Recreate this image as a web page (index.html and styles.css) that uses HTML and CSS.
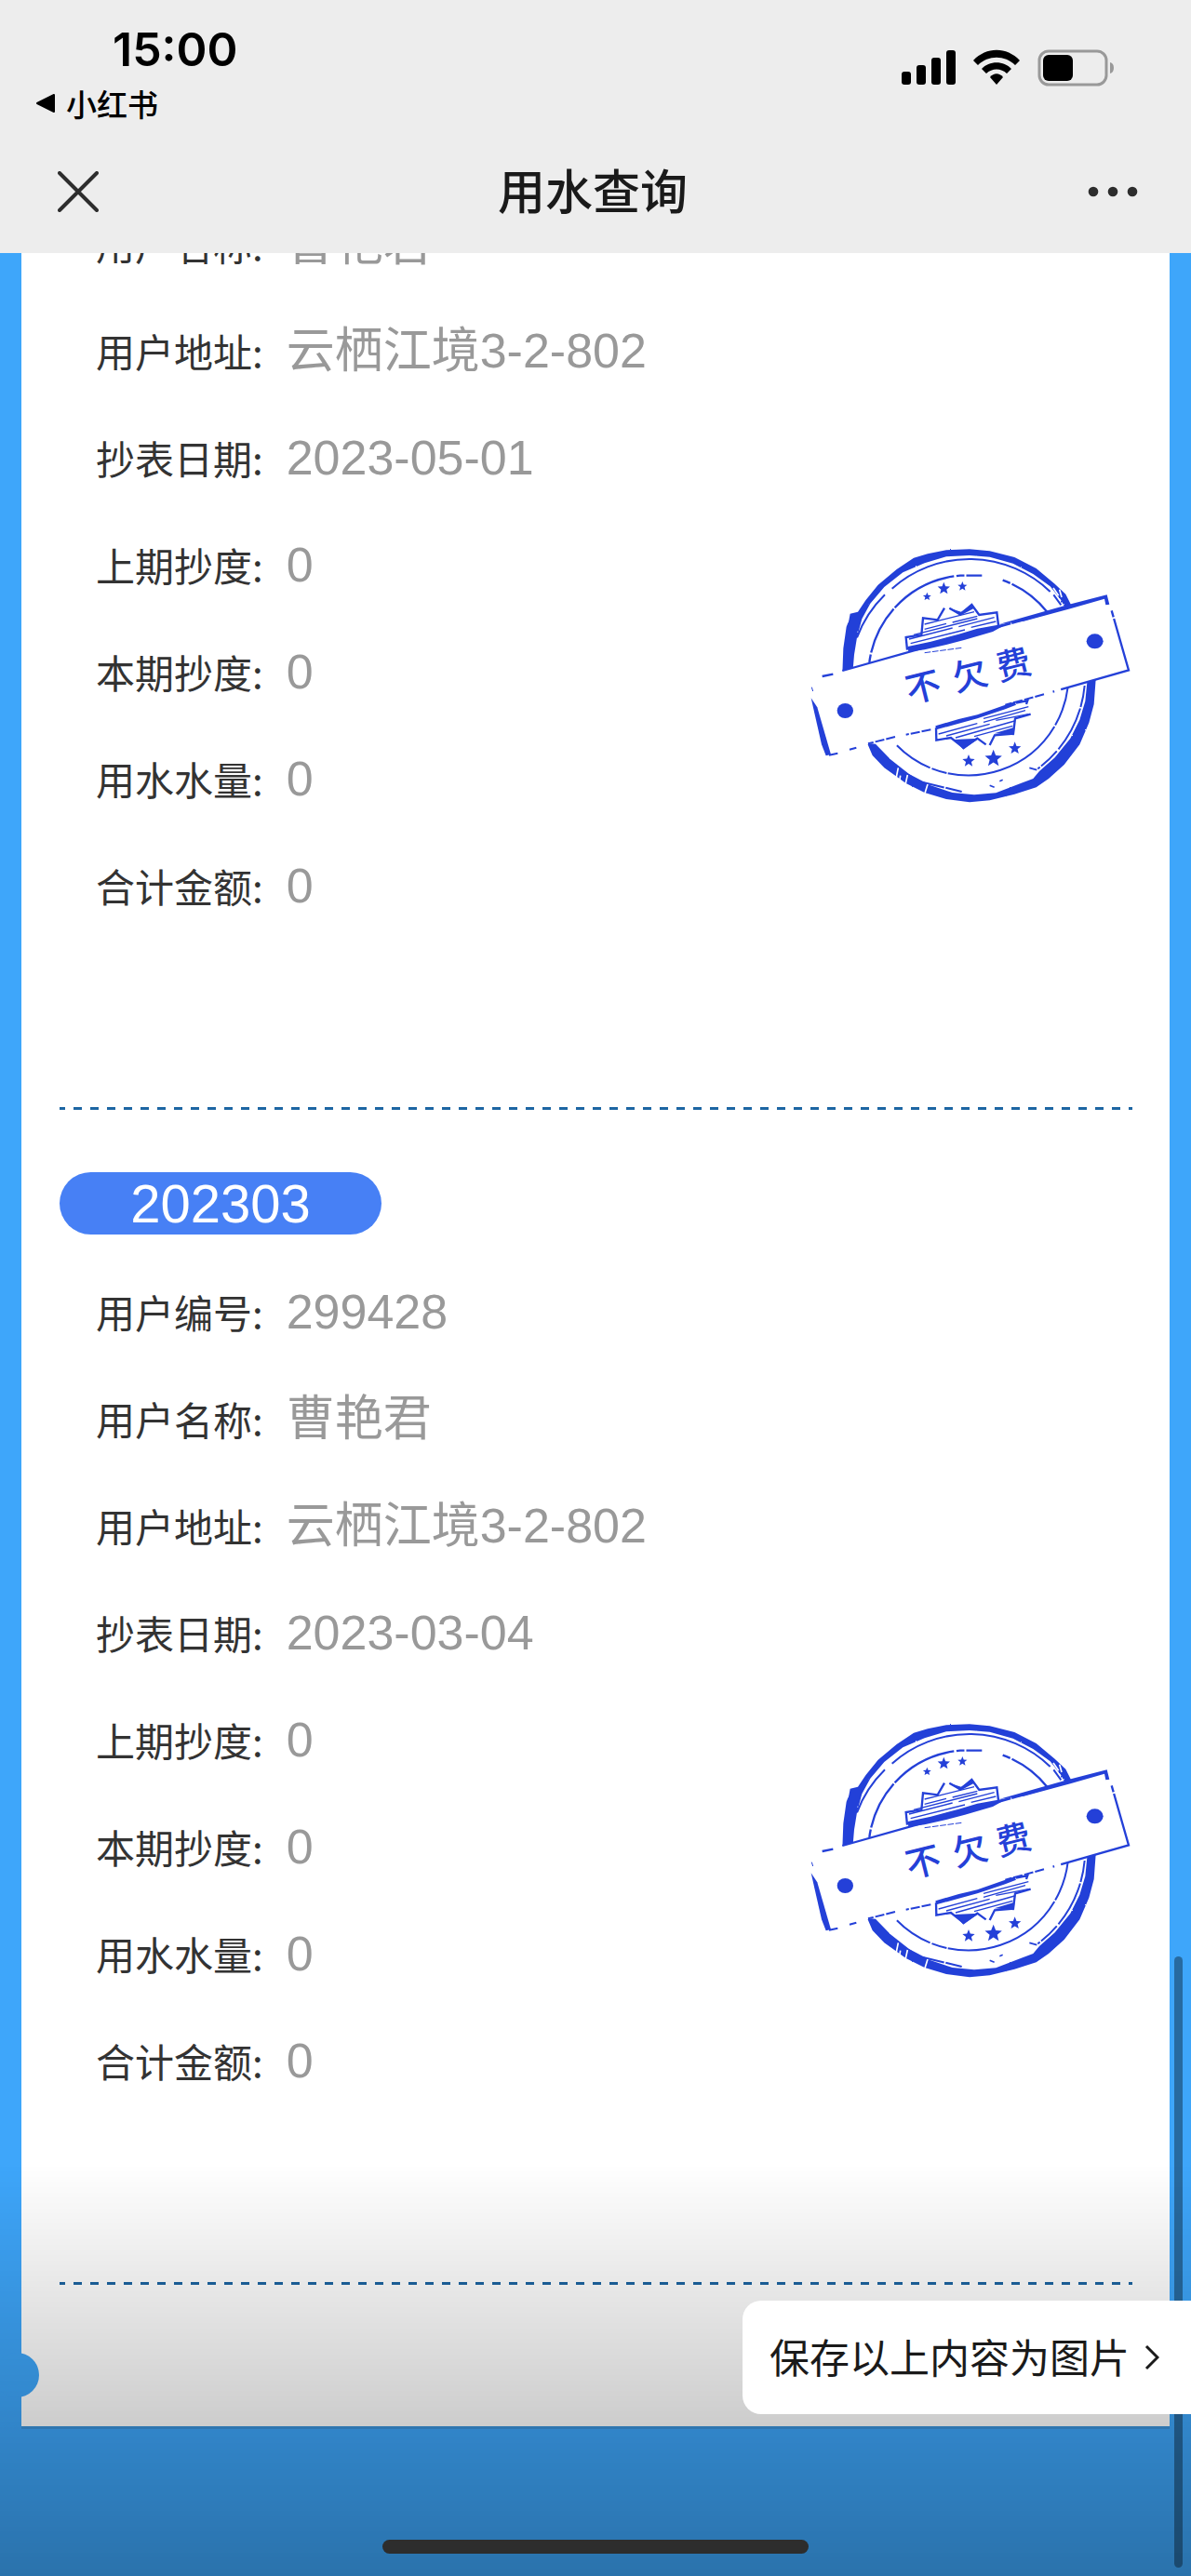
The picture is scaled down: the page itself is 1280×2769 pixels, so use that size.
FILE: index.html
```
<!DOCTYPE html>
<html lang="zh-CN">
<head>
    <meta charset="UTF-8">
    <meta name="viewport" content="width=device-width, initial-scale=1.0">
    <title>用水查询</title>
    <link rel="stylesheet" href="styles.css">
</head>
<body>
    <header class="top">
        <div class="status-bar">
            <div class="status-left">
                <div class="time">15:00</div>
                <a class="back-app" href="#">
                    <svg width="22" height="22" viewBox="0 0 22 22"><path d="M20 2v18L2 11z" fill="#000" stroke="#000" stroke-width="2" stroke-linejoin="round"/></svg>
                    <span>小红书</span>
                </a>
            </div>
            <svg class="status-icons" width="230" height="40" viewBox="0 0 230 40">
                <!-- signal -->
                <rect x="1" y="24" width="10" height="14" rx="3"/>
                <rect x="17" y="17" width="10" height="21" rx="3"/>
                <rect x="33" y="9" width="10" height="29" rx="3"/>
                <rect x="49" y="1" width="10" height="37" rx="3"/>
                <!-- wifi -->
                <path d="M78 12C92-3 114-3 128 12L123 17C112 6 94 6 83 17Z"/>
                <path d="M87 21C95 12 111 12 119 21L114 26C108 20 98 20 92 26Z"/>
                <path d="M96 30C100 25 106 25 110 30L103 38Z"/>
                <!-- battery -->
                <rect x="149" y="2" width="72" height="36" rx="10" fill="none" stroke="#999" stroke-width="3"/>
                <rect x="153" y="6" width="32" height="28" rx="6"/>
                <path d="M225 14q4 1 4 6t-4 6z" fill="#999"/>
            </svg>
        </div>
        <div class="nav-bar">
            <button class="icon-btn" aria-label="关闭">
                <svg width="44" height="44" viewBox="0 0 44 44"><path d="M2 2L42 42M42 2L2 42" stroke="#2d2d2d" stroke-width="4" stroke-linecap="round"/></svg>
            </button>
            <h1>用水查询</h1>
            <button class="icon-btn" aria-label="更多">
                <svg width="56" height="44" viewBox="0 0 56 44" fill="#2d2d2d"><circle cx="7" cy="22" r="5.3"/><circle cx="28" cy="22" r="5.3"/><circle cx="49" cy="22" r="5.3"/></svg>
            </button>
        </div>
    </header>

    <main class="content">
        <div class="card">
            <section class="record">
                <div class="record-body">
                    <dl>
                        <div class="row"><dt>用户名称:</dt><dd>曹艳君</dd></div>
                        <div class="row"><dt>用户地址:</dt><dd>云栖江境3-2-802</dd></div>
                        <div class="row"><dt>抄表日期:</dt><dd>2023-05-01</dd></div>
                        <div class="row"><dt>上期抄度:</dt><dd>0</dd></div>
                        <div class="row"><dt>本期抄度:</dt><dd>0</dd></div>
                        <div class="row"><dt>用水水量:</dt><dd>0</dd></div>
                        <div class="row"><dt>合计金额:</dt><dd>0</dd></div>
                    </dl>
                    <svg class="stamp" viewBox="50 50 1050 831">
                        <defs>
                            <filter id="rough" x="-5%" y="-5%" width="110%" height="110%">
                                <feTurbulence type="fractalNoise" baseFrequency="0.09" numOctaves="2" seed="4"/>
                                <feDisplacementMap in="SourceGraphic" scale="5" xChannelSelector="R" yChannelSelector="G"/>
                            </filter>
                            <path id="star" d="M0-10L2.6-3.5 9.5-3 4.2 1.4 5.9 8.1 0 4.4-5.9 8.1-4.2 1.4-9.5-3-2.6-3.5Z"/>
                        </defs>
                        <g id="seal" fill="#2440d8" stroke="#2440d8">
                            <!-- outer ring -->
                            <g filter="url(#rough)" stroke="none">
                                <path d="M165 460L168 380 178 310 186 290 190 268 215 262 240 225 280 175 340 125 395 88 440 75 500 63 575 60 640 66 720 86 790 122 850 172 885 205 905 245 885 252 868 222 835 180 780 140 715 106 640 85 575 80 500 84 430 105 360 135 300 182 255 235 228 285 212 345 203 400 198 460Z"/>
                                <path d="M245 685L272 688 320 738 380 785 450 822 520 845 590 852 660 846 740 815 780 800 800 776 850 732 900 670 930 610 948 550 955 480 982 480 976 560 960 620 930 690 880 755 830 800 790 828 720 850 640 870 575 876 500 866 430 845 370 815 300 765 262 725Z"/>
                            </g>
                            <path d="M325 187A375 375 0 0 1 835 197M846 207L870 240M302 207A375 375 0 0 0 212 345" fill="none" stroke-width="6"/>
                            <path d="M946 500A375 375 0 0 1 795 768M308 735L325 750M345 768L390 795M425 812L550 842" fill="none" stroke-width="6" stroke-dasharray="70 5 150 8"/>
                            <path d="M252 425A323 323 0 0 1 545 145L615 145M682 160A323 323 0 0 1 825 262" fill="none" stroke-width="7" stroke-dasharray="26 6 160 5 220 8"/>
                            <path d="M892 505A323 323 0 0 1 340 692" fill="none" stroke-width="6" stroke-dasharray="130 5 400 4 50 6"/>
                            <path d="M845 185L862 210M865 190L872 215M345 765L338 800M375 788L368 820M352 790L348 815M440 818L430 850M770 765L790 772" stroke="#fff" stroke-width="5"/>
                            <path d="M768 765L792 772M640 822L655 828M672 808L682 804" stroke-width="5"/>
                            <!-- stars -->
                            <g stroke="none">
                                <use href="#star" transform="translate(438 213) scale(1.4)"/>
                                <use href="#star" transform="translate(492 187) scale(2.1)"/>
                                <use href="#star" transform="translate(552 180) scale(1.6)"/>
                                <use href="#star" transform="translate(572 743) scale(2.1)"/>
                                <use href="#star" transform="translate(652 735) scale(2.9)"/>
                                <use href="#star" transform="translate(721 702) scale(2.1)"/>
                            </g>
                            <!-- ribbon -->
                            <path d="M52 485L1018 210 1088 450 122 725Z" fill="#fff" stroke="none"/>
                            <path d="M165 452L1018 212M100 470L135 463" fill="none" stroke-width="7" stroke-dasharray="360 4 200 3"/>
                            <path d="M670 302L890 240 1018 207 1026 238 1014 240 1010 220 900 252 750 292Z" stroke="none"/>
                            <path d="M1033 258L1088 450 830 524" fill="none" stroke-width="7" stroke-dasharray="22 5 400"/>
                            <path d="M815 528L690 562M450 642L370 658M335 665L248 687M210 700L188 706M150 718L122 724" fill="none" stroke-width="6" stroke-dasharray="30 6"/>
                            <path d="M64 540L84 570 128 722 112 726 98 690Z" stroke="none"/>
                            <path d="M66 505L70 518" stroke-width="3"/>
                            <ellipse cx="174" cy="581" rx="26" ry="24" stroke="none"/>
                            <ellipse cx="979" cy="357" rx="27" ry="24" stroke="none"/>
                            <!-- badge above and below the ribbon -->
                            <path d="M374 385L370 344 420 336 425 282 472 288 494 250M510 250L545 270 582 239 606 272 663 264 668 305" fill="none" stroke-width="7"/>
                            <path d="M510 250L548 262 582 239 590 250 545 274Z" stroke="none"/>
                            <path d="M430 302L590 262M430 318L500 300M520 296L600 276M395 336L600 284M380 350L520 314M540 310L655 280M385 364L560 320M580 312L660 293" fill="none" stroke-width="4"/>
                            <path d="M376 374L450 358 540 334 600 316 700 298 650 326 560 352 500 368 430 384 378 391Z" stroke="none"/>
                            <path d="M430 394L550 378" stroke-width="3" stroke-dasharray="20 5"/>
                            <path d="M465 630L540 608 600 594 720 552 725 562 690 576 600 606 540 622 468 642Z" stroke="none"/>
                            <path d="M467 636L468 676 515 668 555 700 600 670 628 690M640 692L656 660 716 655 722 606 772 592M725 556L762 548 758 560" fill="none" stroke-width="7"/>
                            <path d="M525 674L605 670 555 706ZM655 654L720 634 718 660Z" stroke="none"/>
                            <path d="M475 656L600 622M620 606L765 568M500 662L640 624M620 618L755 580M530 668L720 614M660 612L765 592M590 664L714 630" fill="none" stroke-width="4"/>
                        </g>
                        <text class="stamp-text" x="425 580 725" y="545" transform="rotate(-14 425 503)">不欠费</text>
                    </svg>
                </div>
                <hr class="divider">
            </section>

            <section class="record">
                <h2 class="month">202303</h2>
                <div class="record-body">
                    <dl>
                        <div class="row"><dt>用户编号:</dt><dd>299428</dd></div>
                        <div class="row"><dt>用户名称:</dt><dd>曹艳君</dd></div>
                        <div class="row"><dt>用户地址:</dt><dd>云栖江境3-2-802</dd></div>
                        <div class="row"><dt>抄表日期:</dt><dd>2023-03-04</dd></div>
                        <div class="row"><dt>上期抄度:</dt><dd>0</dd></div>
                        <div class="row"><dt>本期抄度:</dt><dd>0</dd></div>
                        <div class="row"><dt>用水水量:</dt><dd>0</dd></div>
                        <div class="row"><dt>合计金额:</dt><dd>0</dd></div>
                    </dl>
                    <svg class="stamp" viewBox="50 50 1050 831">
                        <use href="#seal"/>
                        <text class="stamp-text" x="425 580 725" y="545" transform="rotate(-14 425 503)">不欠费</text>
                    </svg>
                </div>
                <hr class="divider">
            </section>
            <span class="notch"></span>
        </div>
    </main>

    <div class="shade"></div>
    <div class="scroll-thumb"></div>
    <button class="save-btn">
        <span>保存以上内容为图片</span>
        <svg width="16" height="28" viewBox="0 0 16 28"><path d="M2 2L14 14 2 26" fill="none" stroke="#1a1a1a" stroke-width="3"/></svg>
    </button>
    <div class="home-bar"></div>
</body>
</html>
```

FILE: styles.css
```
* {
    margin: 0;
    padding: 0;
    box-sizing: border-box;
}

body {
    display: flex;
    flex-direction: column;
    min-height: 100vh;
    font-family: "Liberation Sans", "Noto Sans CJK SC", sans-serif;
    background-color: #3ea6fa;
    color: #333;
}

button {
    border: none;
    background: none;
    font-family: inherit;
    cursor: pointer;
}

svg {
    display: block;
}

/* header */
.top {
    background-color: #ededed;
}

.status-bar {
    display: flex;
    justify-content: space-between;
    height: 140px;
    padding: 22px 82px 0 38px;
}

.time {
    padding-left: 83px;
    font-family: Inter, sans-serif;
    font-size: 50px;
    font-weight: 600;
    line-height: 62px;
    color: #000;
}

.back-app {
    display: flex;
    align-items: center;
    gap: 11px;
    height: 54px;
    font-family: "Noto Sans CJK SC", sans-serif;
    font-size: 33px;
    font-weight: 500;
    line-height: 54px;
    color: #000;
    text-decoration: none;
}

.status-icons {
    margin-top: 31px;
}

.nav-bar {
    display: flex;
    align-items: center;
    justify-content: space-between;
    height: 132px;
    padding: 0 56px 0 62px;
}

.nav-bar h1 {
    padding-bottom: 6px;
    font-family: "Noto Sans CJK SC", sans-serif;
    font-size: 51px;
    font-weight: 500;
    line-height: 60px;
    color: #1a1a1a;
}

/* content */
.content {
    flex: 1;
    overflow: hidden;
    padding: 0 23px 161px;
}

/* the list is scrolled, its first row runs under the header */
.card {
    position: relative;
    margin-top: -68px;
    padding: 0 40px 152px 41px;
    background-color: #fff;
    box-shadow: 0 3px 0 #3b94dc;
}

.month {
    width: 346px;
    margin: 67px 0 25px;
    border-radius: 34px;
    background-color: #4780f5;
    font-size: 58px;
    font-weight: normal;
    line-height: 67px;
    text-align: center;
    color: #fff;
}

.record-body {
    display: flex;
    justify-content: space-between;
    align-items: flex-end;
    margin-bottom: 181px;
    padding-left: 39px;
}

.row {
    display: flex;
    align-items: baseline;
    gap: 25px;
    height: 115px;
    line-height: 115px;
}

.row dt {
    font-family: "Noto Sans CJK SC", sans-serif;
    font-size: 42px;
    color: #333;
}

.row dd {
    font-size: 52px;
    color: #999;
}

.stamp {
    width: 350px;
    height: 277px;
    margin-bottom: 145px;
}

.stamp-text {
    font-family: "Noto Sans CJK SC", sans-serif;
    font-size: 112px;
    font-weight: 500;
    text-anchor: middle;
    fill: #2440d8;
}

.divider {
    height: 3px;
    border: none;
    background: repeating-linear-gradient(to right, #1d66a3 0 6px, transparent 6px 15px, #1d66a3 15px 18px);
}

.notch {
    position: absolute;
    left: -29px;
    bottom: 31px;
    width: 48px;
    height: 48px;
    border-radius: 50%;
    background-color: #3ea6fa;
}

/* floating parts */
.shade {
    position: fixed;
    left: 0;
    right: 0;
    bottom: 0;
    height: 443px;
    background: linear-gradient(to bottom, rgba(0, 0, 0, 0), rgba(0, 0, 0, 0.31));
    pointer-events: none;
}

.scroll-thumb {
    position: fixed;
    right: 9px;
    bottom: 9px;
    width: 9px;
    height: 657px;
    border-radius: 5px;
    background-color: rgba(0, 0, 0, 0.36);
}

.save-btn {
    position: fixed;
    right: 0;
    bottom: 174px;
    display: flex;
    align-items: center;
    gap: 16px;
    height: 122px;
    padding: 0 34px 0 29px;
    border-radius: 20px 0 0 20px;
    background-color: #fff;
    font-family: "Noto Sans CJK SC", sans-serif;
    font-size: 43px;
    color: #1a1a1a;
}

.save-btn span {
    padding-bottom: 4px;
}

.home-bar {
    position: fixed;
    left: 50%;
    bottom: 24px;
    width: 458px;
    height: 15px;
    margin-left: -229px;
    border-radius: 8px;
    background-color: #2d2d2d;
}
```
